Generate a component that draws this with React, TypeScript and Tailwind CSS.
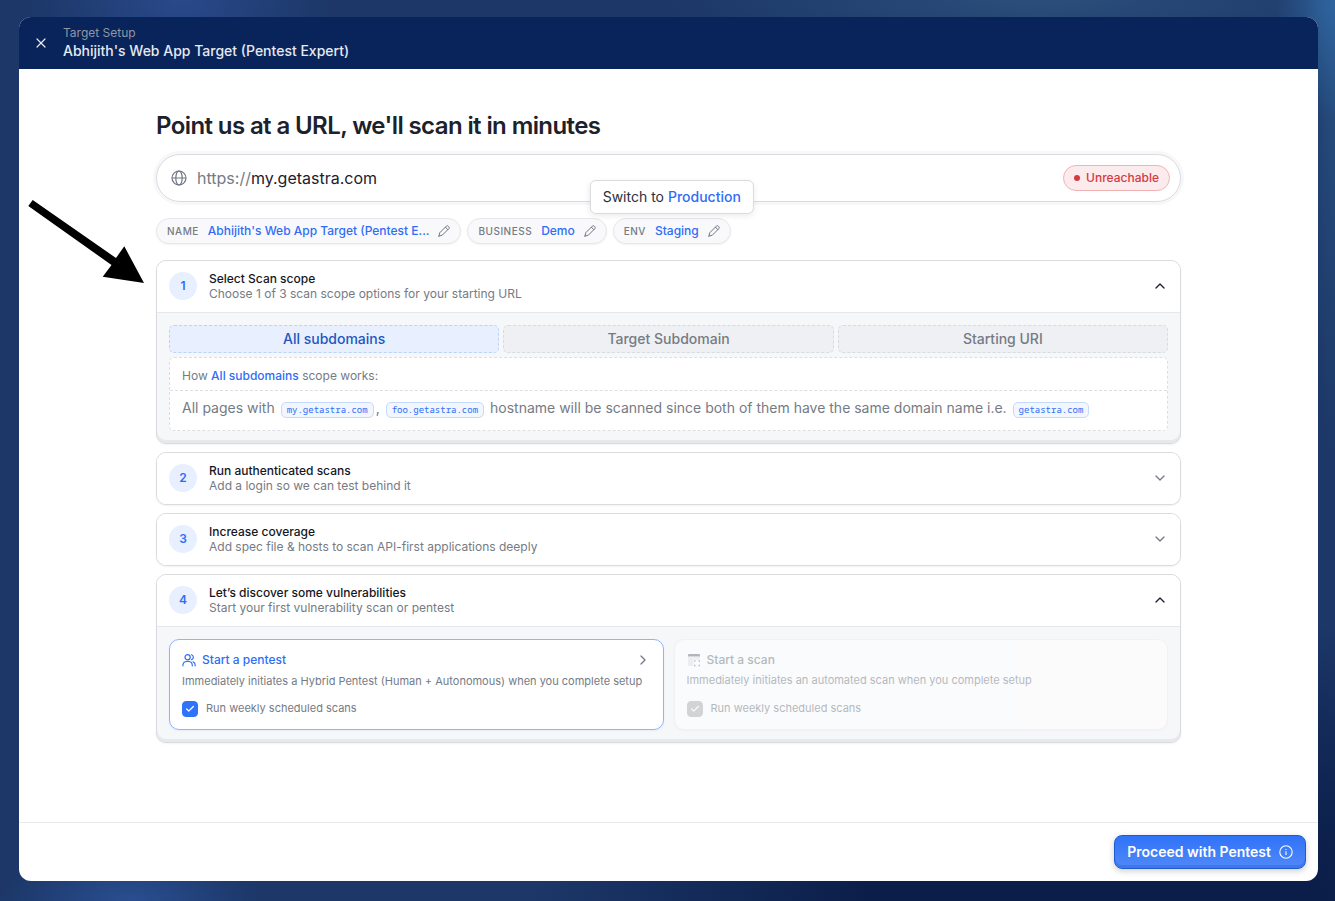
import React, { useId, useState } from "react";
import { Check, ChevronDown, ChevronRight, ChevronUp, X } from "lucide-react";

function GlobeIcon() {
  return (
    <svg viewBox="0 0 16 16" className="size-4 shrink-0 text-[#6f7683]" fill="none" stroke="currentColor" strokeWidth="1.2" aria-hidden="true">
      <circle cx="8" cy="8" r="7" />
      <ellipse cx="8" cy="8" rx="3.2" ry="7" />
      <path d="M1 8h14" />
    </svg>
  );
}

function PencilIcon() {
  return (
    <svg viewBox="0 0 12 12" className="size-3 shrink-0 text-[#6f7683]" fill="none" stroke="currentColor" strokeWidth="1" strokeLinejoin="round" strokeLinecap="round" aria-hidden="true">
      <path d="M.9 11.1l.9-3.4L8.3 1.2a1.4 1.4 0 0 1 2 0l.5.5a1.4 1.4 0 0 1 0 2L4.3 10.2l-3.4.9z" />
      <path d="M7.4 2.2l2.4 2.4" />
    </svg>
  );
}

function PeopleIcon() {
  return (
    <svg viewBox="0 0 14 14" className="size-3.5 shrink-0" fill="none" stroke="currentColor" strokeWidth="1.2" strokeLinecap="round" strokeLinejoin="round" aria-hidden="true">
      <circle cx="5.6" cy="4.2" r="2.6" />
      <path d="M.9 12.8v-.5a4 4 0 0 1 4-3.8h1.4a4 4 0 0 1 4 3.8v.5" />
      <path d="M9.6 1.7a2.6 2.6 0 0 1 0 4.9M11 8.8a3.8 3.8 0 0 1 2.2 3.5v.5" />
    </svg>
  );
}

function ScanIcon() {
  return (
    <svg viewBox="0 0 14 14" className="size-3.5 shrink-0" aria-hidden="true">
      <path d="M1 4.2h12v2.3H6.3V13H2.5A1.5 1.5 0 0 1 1 11.5z" fill="#6f7683" opacity="0.2" />
      <path d="M1 3.6V2.2A1.2 1.2 0 0 1 2.2 1h9.6A1.2 1.2 0 0 1 13 2.2v1.4z" fill="#6f7683" />
      <path d="M7.5 9V7.7h1.3M11.2 7.7h1.3V9M12.5 11.5v1.3h-1.3M8.8 12.8H7.5v-1.3" fill="none" stroke="#6f7683" strokeWidth="1" opacity="0.8" />
    </svg>
  );
}

function InfoIcon() {
  return (
    <svg viewBox="0 0 14 14" className="size-3.5 shrink-0" fill="none" stroke="currentColor" strokeWidth="1.1" aria-hidden="true">
      <circle cx="7" cy="7" r="6.2" />
      <path d="M7 6.3v3.8M7 3.9v1.2" />
    </svg>
  );
}

function MetaPill({ label, value }: { label: string; value: string }) {
  return (
    <button
      type="button"
      className="flex h-[26px] items-center gap-[9px] rounded-full border border-[#e6e7ea] bg-[#f9f9fb] px-2.5 shadow-[0_1px_2px_rgba(0,0,0,0.05)]"
    >
      <span className="text-[10px] font-medium tracking-wider text-[#757b85] uppercase">{label}</span>
      <span className="max-w-56 truncate text-xs font-medium text-[#2f6df6]">{value}</span>
      <PencilIcon />
    </button>
  );
}

function HostCode({ children }: { children: React.ReactNode }) {
  return (
    <code className="mx-0.5 inline-block rounded-[5px] border border-[#c5dafd] bg-[#f1f6ff] px-[5px] font-['Noto_Sans_Mono','DejaVu_Sans_Mono',monospace] text-[9px] leading-[14px] text-[#2f6df6]">
      {children}
    </code>
  );
}

type StepProps = {
  step: number;
  title: string;
  subtitle: string;
  children?: React.ReactNode;
};

function StepCard({ step, title, subtitle, children }: StepProps) {
  const [open, setOpen] = useState(Boolean(children));
  const expanded = open && Boolean(children);
  return (
    <section
      className={
        expanded
          ? "overflow-hidden rounded-[10px] border border-[#d9dbdf] bg-[#f6f7f9] shadow-[0_1px_2px_rgba(0,0,0,0.05),inset_0_-3px_0_#e7e9ec]"
          : "overflow-hidden rounded-[10px] border border-[#d9dbdf] bg-white shadow-[0_1px_2px_rgba(0,0,0,0.06)]"
      }
    >
      <button
        type="button"
        aria-expanded={expanded}
        onClick={() => setOpen(!open)}
        className="flex h-[51px] w-full items-center gap-3 bg-white px-3 pb-px text-left"
      >
        <span className="flex size-7 items-center justify-center rounded-full bg-[#e8f0ff] text-xs font-semibold text-[#2f6df6]">
          {step}
        </span>
        <span className="flex flex-1 flex-col pb-px text-xs leading-[15px]">
          <span className="font-medium text-[#14171f]">{title}</span>
          <span className="text-[#757b85]">{subtitle}</span>
        </span>
        {expanded ? (
          <ChevronUp className="size-4 text-[#1c2230]" />
        ) : (
          <ChevronDown className="size-4 text-[#757b85]" />
        )}
      </button>
      {expanded && <div className="border-t border-[#e6e8eb] p-3">{children}</div>}
    </section>
  );
}

const scopes = ["All subdomains", "Target Subdomain", "Starting URI"];

function ScopePicker() {
  const [active, setActive] = useState(0);
  return (
    <div className="flex flex-col gap-1">
      <div role="tablist" aria-label="Scan scope" className="grid grid-cols-3 gap-1">
        {scopes.map((scope, i) => (
          <button
            key={scope}
            type="button"
            role="tab"
            aria-selected={i === active}
            onClick={() => setActive(i)}
            className={
              i === active
                ? "h-7 rounded-[5px] border border-dashed border-[#bcd2fa] bg-[#e8f0ff] text-sm font-medium text-[#2456c0]"
                : "h-7 rounded-[5px] border border-dashed border-[#d9dbdf] bg-[#eff0f3] text-sm font-medium text-[#757b85]"
            }
          >
            {scope}
          </button>
        ))}
      </div>
      <div role="tabpanel" className="rounded-[5px] border border-dashed border-[#dcdee2] bg-white text-[#757b85]">
        <p className="border-b border-dashed border-[#dcdee2] px-3 pt-2.5 pb-1.5 text-xs">
          How <span className="font-medium text-[#2f6df6]">{scopes[active]}</span> scope works:
        </p>
        <p className="px-3 pt-[5px] pb-2.5 text-sm leading-6">
          All pages with <HostCode>my.getastra.com</HostCode>, <HostCode>foo.getastra.com</HostCode> hostname will be
          scanned since both of them have the same domain name i.e. <HostCode>getastra.com</HostCode>
        </p>
      </div>
    </div>
  );
}

function WeeklyCheckbox({ disabled = false }: { disabled?: boolean }) {
  const id = useId();
  return (
    <div className="flex items-center gap-2">
      <span className="relative size-4">
        <input
          id={id}
          type="checkbox"
          defaultChecked
          disabled={disabled}
          className="peer block size-4 appearance-none rounded-[4px] border border-[#2f73f8] bg-white checked:bg-[#2f73f8] disabled:border-[#b0b1b3] disabled:checked:bg-[#b0b1b3]"
        />
        <Check
          className="pointer-events-none absolute inset-0 m-auto hidden size-2.5 text-white peer-checked:block"
          strokeWidth={3}
        />
      </span>
      <label htmlFor={id} className="pb-0.5 text-[11px] leading-[14px] text-[#757b85]">
        Run weekly scheduled scans
      </label>
    </div>
  );
}

function StartOptions() {
  return (
    <div className="grid grid-cols-2 gap-2.5">
      <div className="rounded-[10px] border border-[#8fb4fb] bg-white p-3 shadow-[0_1px_2px_rgba(47,109,246,0.08)]">
        <button type="button" className="flex w-full items-center gap-1.5 text-left text-xs font-medium text-[#2f6df6]">
          <PeopleIcon />
          <span className="flex-1">Start a pentest</span>
          <ChevronRight className="size-4 text-[#757b85]" />
        </button>
        <p className="mt-[5px] mb-3 text-[11px] leading-4 text-[#757b85]">
          Immediately initiates a Hybrid Pentest (Human + Autonomous) when you complete setup
        </p>
        <WeeklyCheckbox />
      </div>
      <div className="rounded-[10px] border border-[#ebecef] bg-white p-3 opacity-50 shadow-[0_1px_2px_rgba(0,0,0,0.04)]">
        <button type="button" disabled className="flex w-full items-center gap-1.5 text-left text-xs font-medium text-[#757b85]">
          <ScanIcon />
          <span className="flex-1">Start a scan</span>
        </button>
        <p className="mt-1 mb-[13px] text-[11px] leading-4 text-[#757b85]">
          Immediately initiates an automated scan when you complete setup
        </p>
        <WeeklyCheckbox disabled />
      </div>
    </div>
  );
}

export default function App() {
  return (
    <div className="relative flex min-h-screen flex-col bg-[#1c3768] bg-[radial-gradient(ellipse_150px_90px_at_180px_0px,#29498a,transparent),radial-gradient(ellipse_130px_60px_at_130px_100%,#294e90,transparent),radial-gradient(ellipse_60px_120px_at_100%_0px,#2f649f,transparent),radial-gradient(ellipse_380px_60px_at_78%_0px,#2b4f7b,transparent),radial-gradient(ellipse_30px_420px_at_100%_40px,#28507f,transparent),radial-gradient(ellipse_560px_300px_at_82%_100%,#0b1e49_40%,transparent)] pt-[17px] pr-[17px] pb-5 pl-[19px] font-['Inter',sans-serif]">
      <div className="flex flex-1 flex-col overflow-hidden rounded-[12px] bg-white">
        <header className="flex h-[52px] items-center gap-3.5 bg-[#09245b] px-3.5">
          <button type="button" aria-label="Close" className="text-[#e6e9f0]">
            <X className="size-4" strokeWidth={1.8} />
          </button>
          <div className="flex flex-col">
            <span className="text-xs leading-4 text-[#9097a4]">Target Setup</span>
            <span className="text-sm leading-5 font-medium text-[#e6e9f0]">Abhijith's Web App Target (Pentest Expert)</span>
          </div>
        </header>

        <main className="mx-auto w-full max-w-[1025px] flex-1 pt-[41px] pb-[79px]">
          <h1 className="text-2xl leading-8 font-semibold tracking-tight text-[#1c212b]">
            Point us at a URL, we'll scan it in minutes
          </h1>

          <div className="mt-3 flex h-12 items-center rounded-full border border-[#d9dbdf] bg-white pr-2.5 pl-3.5 shadow-[0_0_0_3px_#f6f7f9]">
            <GlobeIcon />
            <label htmlFor="target-url" className="ml-2.5 text-base text-[#757b85]">
              https://
            </label>
            <input
              id="target-url"
              type="text"
              defaultValue="my.getastra.com"
              className="min-w-0 flex-1 bg-transparent text-base text-[#1c212b] outline-none"
            />
            <span className="flex h-[26px] items-center gap-1.5 rounded-full border border-[#f2b3b5] bg-[#fcebec] px-2.5 text-xs font-medium text-[#d63a3f]">
              <span className="size-1.5 rounded-full bg-[#d63a3f]" />
              Unreachable
            </span>
          </div>

          <div className="mt-4 flex gap-1.5">
            <MetaPill label="Name" value="Abhijith's Web App Target (Pentest E..." />
            <MetaPill label="Business" value="Demo" />
            <div className="relative">
              <MetaPill label="Env" value="Staging" />
              <div
                role="tooltip"
                className="absolute bottom-[30px] left-1/2 -translate-x-1/2 rounded-[6px] border border-[#d9dbdf] bg-white px-3 py-1.5 text-sm leading-5 whitespace-nowrap text-[#2b303b] shadow-[0_2px_6px_rgba(0,0,0,0.08)]"
              >
                Switch to <span className="font-medium text-[#2f6df6]">Production</span>
              </div>
            </div>
          </div>

          <div className="mt-4 flex flex-col gap-2">
            <StepCard step={1} title="Select Scan scope" subtitle="Choose 1 of 3 scan scope options for your starting URL">
              <ScopePicker />
            </StepCard>
            <StepCard step={2} title="Run authenticated scans" subtitle="Add a login so we can test behind it" />
            <StepCard step={3} title="Increase coverage" subtitle="Add spec file & hosts to scan API-first applications deeply" />
            <StepCard step={4} title="Let’s discover some vulnerabilities" subtitle="Start your first vulnerability scan or pentest">
              <StartOptions />
            </StepCard>
          </div>
        </main>

        <footer className="flex items-center justify-end border-t border-[#e9eaec] p-3">
          <button
            type="button"
            className="flex h-[34px] items-center gap-2 rounded-[8px] border border-[#1f5bd0] bg-linear-to-b from-[#2f73f8] to-[#5088f8] px-3 text-sm font-semibold text-white shadow-[0_2px_6px_rgba(0,0,0,0.2),inset_0_-3px_0_#3f78e8]"
          >
            Proceed with Pentest
            <InfoIcon />
          </button>
        </footer>
      </div>

      <svg viewBox="0 0 116 84" className="pointer-events-none absolute top-[200px] left-7 h-[84px] w-[116px]" aria-hidden="true">
        <path d="M.3 6L4.7 0 88 58l8.3-11.7L116 83 74.7 76.7 83.5 65z" fill="#000" />
      </svg>
    </div>
  );
}
